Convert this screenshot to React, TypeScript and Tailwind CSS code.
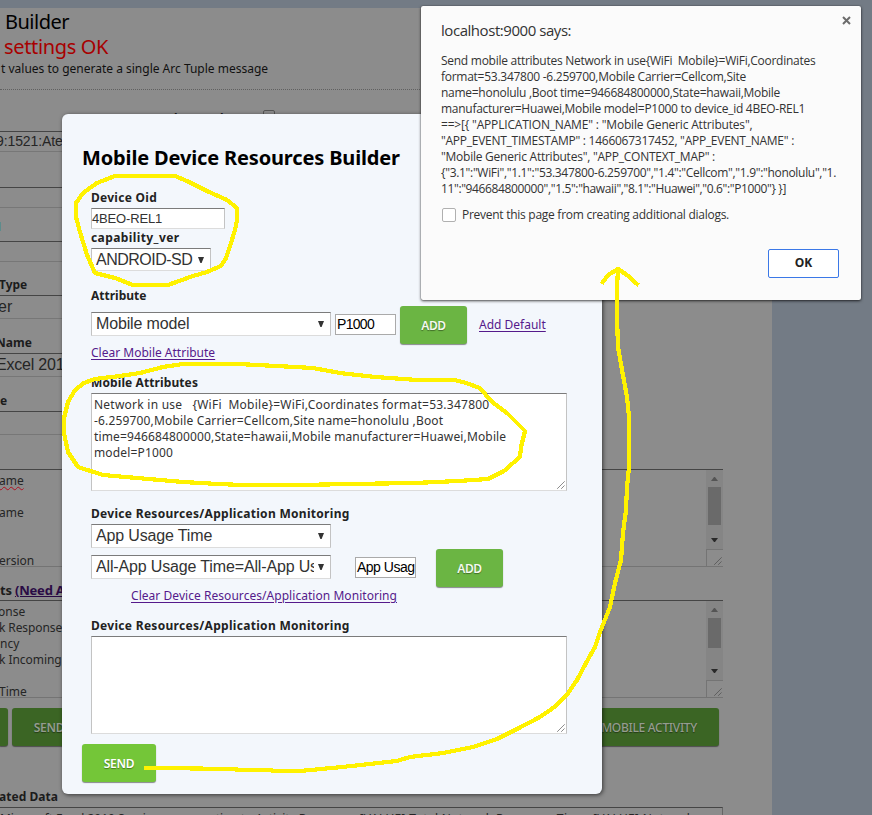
import type { ReactNode } from 'react';

function Grip({ className = '' }: { className?: string }) {
  return (
    <svg className={className} width="8" height="8" viewBox="0 0 8 8" stroke="#444" strokeWidth="1" strokeDasharray="1.1 0.35">
      <path d="M0.5 7.5 L7.5 0.5 M4.5 7.5 L7.5 4.5" fill="none" />
    </svg>
  );
}

function Select({ children, className }: { children: ReactNode; className: string }) {
  return (
    <div className={`flex items-center border border-t-[#7b7b7b] border-r-[#c3c3c3] border-b-[#dcdcdc] border-l-[#c3c3c3] bg-white pl-1 pr-1.5 font-['Liberation_Sans',sans-serif] text-[16px] text-[#333] ${className}`}>
      <span className="flex-1 overflow-hidden whitespace-nowrap leading-[20px]">{children}</span>
      <svg width="6" height="6" viewBox="0 0 6 6" className="ml-1 shrink-0">
        <path d="M0 0H6L3.6 6H2.4Z" fill="#333" />
      </svg>
    </div>
  );
}

function Button({ children, className }: { children: ReactNode; className: string }) {
  return (
    <button
      className={`flex items-center justify-center rounded-[3px] pt-px text-[12px] font-semibold tracking-[-0.3px] shadow-[0_1px_1px_rgba(0,0,0,0.45)] [text-shadow:0_1px_1px_rgba(0,0,0,0.4)] ${className}`}
    >
      {children}
    </button>
  );
}

function DimField({ children, className = '' }: { children?: ReactNode; className?: string }) {
  return (
    <div className={`w-[200px] whitespace-nowrap border-t border-b border-t-[#454545] border-b-[#777] font-['Liberation_Sans',sans-serif] text-[#252525] ${className}`}>
      {children}
    </div>
  );
}

function DimArea({ thumb, children }: { thumb: ReactNode; children: ReactNode }) {
  return (
    <div className="flex h-[98px] w-[723px] border-t border-b border-t-[#454545] border-b-[#747474]">
      <div className="flex-1 whitespace-pre pt-[3px] text-[12px] leading-[16px] text-[#252525]">{children}</div>
      <div className="flex w-[17px] flex-col bg-[#858585]">
        <div className="flex h-[79px] flex-col items-center">
          <svg width="7" height="4" viewBox="0 0 7 4" className="mt-[7px] mb-[6px] shrink-0">
            <path d="M3 0H4L7 4H0Z" fill="#555" />
          </svg>
          {thumb}
          <svg width="7" height="4" viewBox="0 0 7 4" className="mt-auto mb-[7px] shrink-0">
            <path d="M0 0H7L4 4H3Z" fill="#292929" />
          </svg>
        </div>
        <div className="flex flex-1 items-end justify-end border-t border-l border-[#747474] bg-[#8c8c8c] p-px">
          <Grip />
        </div>
      </div>
    </div>
  );
}

function BackgroundPage() {
  return (
    <main className="flex h-[807px] w-[772px] flex-col overflow-hidden bg-[#8c8c8c] text-[12px] text-[#1c1c1c] [&>*]:shrink-0">
      <h1 className="mt-px h-[25px] whitespace-nowrap pl-[5px] text-[20px] leading-[25px] tracking-[-0.5px] text-black">Builder</h1>
      <h2 className="h-[26px] whitespace-nowrap pl-[4px] text-[20px] leading-[25px] tracking-[-0.35px] text-[#a80000]">settings OK</h2>
      <p className="h-[29px] whitespace-nowrap pl-px leading-[18px] text-[#111]">t values to generate a single Arc Tuple message</p>
      <div className="h-[20px] border-t border-dotted border-[#606060]" />
      <div className="flex h-[22px] pt-px font-bold">
        <span className="ml-[174px] w-[42px] pt-px leading-[16px]">l</span>
        <span className="w-[47px] pt-px leading-[16px]">d</span>
        <span className="h-[13px] w-[12px] rounded-[2px] border border-[#555]" />
      </div>
      <DimField className="h-[21px] text-[14px] leading-[19px] tracking-[-0.1px]"><span className="-ml-[4px]">9:1521:Aten</span></DimField>
      <DimField className="mt-[35px] h-[21px]" />
      <div className="flex h-[33px] items-center">
        <span className="mt-1 h-[9px] w-px bg-[#5d8c8c]" />
      </div>
      <DimField className="h-[21px]" />
      <div className="h-[33px] pt-[15px] leading-[16px] font-bold"><span className="-ml-px">Type</span></div>
      <DimField className="h-[24px] text-[16px] leading-[22px]"><span className="-ml-[2px]">er</span></DimField>
      <div className="h-[34px] pt-[16px] leading-[16px] font-bold"><span className="-ml-[4px]">Name</span></div>
      <DimField className="h-[24px] text-[16px] leading-[22px] tracking-[-0.2px]"><span className="-ml-[4px]">Excel 2010</span></DimField>
      <div className="h-[34px] pt-[16px] leading-[16px] font-bold"><span>e</span></div>
      <DimField className="h-[24px]" />
      <div className="h-[34px]" />
      <DimArea thumb={<div className="h-[38px] w-[13px] bg-[#6a6a6a]" />}>
        <div><span className="-ml-px underline decoration-[#b01020] decoration-wavy decoration-[1px] underline-offset-1">ame</span></div>
        <div className="h-4" />
        <div className="-ml-px">ame</div>
        <div className="h-8" />
        <div className="-ml-px">ersion</div>
      </DimArea>
      <div className="h-[33px] pt-[15px] text-[13px] leading-[16px] font-bold tracking-[-0.2px]">
        ts <span className="text-[#2a0b45] underline">(Need Application)</span>
      </div>
      <DimArea thumb={<div className="h-[30px] w-[13px] bg-[#6a6a6a]" />}>
        <div className="-ml-[2px]">onse</div>
        <div className="-ml-px tracking-[-0.1px]">k Response</div>
        <div>ncy</div>
        <div className="-ml-px tracking-[-0.05px]">k Incoming</div>
        <div className="h-4" />
        <div className="-ml-px">Time</div>
      </DimArea>
      <div className="mt-[10px] flex h-[38px] w-[719px] justify-between text-[#959c90]">
        <div className="flex gap-1">
          <Button className="w-[8px] rounded-l-none bg-[#3b6524]">{''}</Button>
          <Button className="w-[74px] bg-[#3b6524]">SEND</Button>
        </div>
        <div className="flex w-[150px] rounded-[3px] bg-[#3b6524] shadow-[0_1px_1px_rgba(0,0,0,0.45)]">
          <span className="ml-auto mr-[22px] pt-px text-[12px] leading-[38px] font-medium tracking-[-0.3px] whitespace-nowrap [text-shadow:0_1px_1px_rgba(0,0,0,0.4)]">MOBILE ACTIVITY</span>
        </div>
      </div>
      <div className="mt-[43px] h-[18px] leading-[16px] font-bold tracking-[0.05px]"><span className="-ml-px">ated Data</span></div>
      <div className="h-[30px] w-[723px] whitespace-nowrap border-t border-r border-t-[#454545] border-r-[#666] pt-[3px] leading-[16px] text-[#252525]">
        <span className="tracking-[-0.02px]">Microsoft Excel 2010 Session consumption to Activity Response: </span>
        <span className="tracking-[0.35px]">[VALUE] Total Network Response Time: [VALUE] Network</span>
      </div>
    </main>
  );
}

function Label({ children, className = '' }: { children: ReactNode; className?: string }) {
  return <div className={`h-4 whitespace-nowrap text-[12px] leading-[16px] font-bold text-[#222] ${className}`}>{children}</div>;
}

function Area({ children }: { children?: ReactNode }) {
  return (
    <div className="flex h-[98px] w-[476px] border border-t-[#7b7b7b] border-r-[#c3c3c3] border-b-[#dcdcdc] border-l-[#c3c3c3] bg-white pt-[3px] pr-px pb-px pl-[2px]">
      <div className="flex-1 whitespace-pre text-[12px] leading-[16px] text-[#333]">{children}</div>
      <Grip className="self-end" />
    </div>
  );
}

function BuilderModal() {
  return (
    <section className="absolute top-[114px] left-[62px] h-[680px] w-[540px] rounded-[6px] bg-[#f3f7fc] shadow-[1px_1px_4px_rgba(0,0,0,0.6)]">
      <h2 className="h-[76px] whitespace-nowrap pt-[30px] pl-5 text-[20px] leading-[28px] font-bold tracking-[-0.15px] text-black">Mobile Device Resources Builder</h2>
      <div className="flex flex-col pl-[29px]">
        <Label className="tracking-[0.27px]">Device Oid</Label>
        <div className="mt-[2px] h-[21px] w-[134px] border border-t-[#7b7b7b] border-r-[#c3c3c3] border-b-[#dcdcdc] border-l-[#c3c3c3] bg-white font-['Liberation_Sans',sans-serif] text-[13px] leading-[19px] tracking-[-0.15px] text-[#333]">4BEO-REL1</div>
        <Label className="mt-px tracking-[0.4px]">capability_ver</Label>
        <Select className="mt-[2px] h-[23px] w-[120px] tracking-[-0.5px]">ANDROID-SD</Select>
        <Label className="mt-[17px]">Attribute</Label>
        <div className="mt-[2px] flex h-[38px]">
          <Select className="mt-[6px] h-[24px] w-[240px] tracking-[-0.15px]">Mobile model</Select>
          <div className="mt-[8px] ml-1 h-[21px] w-[61px] border border-[#aaa] bg-white pl-px font-['Liberation_Sans',sans-serif] text-[14px] leading-[19px] tracking-[-0.7px] text-black">P1000</div>
          <Button className="ml-1 w-[67px] bg-[#6bb543] text-[#f4faef]">ADD</Button>
          <a className="ml-3 text-[12px] leading-[37px] text-[#551a8b] underline underline-offset-2">Add Default</a>
        </div>
        <a className="mt-px h-4 text-[12px] leading-[16px] text-[#551a8b] underline underline-offset-2">Clear Mobile Attribute</a>
        <Label className="mt-[14px] mb-[2px] tracking-[0.1px]">Mobile Attributes</Label>
        <Area>
          <div className="tracking-[0.24px]">{'Network in use   {WiFi  Mobile}=WiFi,Coordinates format=53.347800'}</div>
          <div className="tracking-[0.16px]">-6.259700,Mobile Carrier=Cellcom,Site name=honolulu ,Boot</div>
          <div className="tracking-[0.14px]">time=946684800000,State=hawaii,Mobile manufacturer=Huawei,Mobile</div>
          <div className="tracking-[0.15px]">model=P1000</div>
        </Area>
        <Label className="mt-[15px] tracking-[0.3px]">Device Resources/Application Monitoring</Label>
        <Select className="mt-[2px] h-[24px] w-[240px] tracking-[-0.15px]">App Usage Time</Select>
        <div className="mt-px flex h-[38px]">
          <Select className="mt-[6px] h-[24px] w-[240px] tracking-[-0.15px]">All-App Usage Time=All-App Us</Select>
          <div className="mt-[8px] ml-6 h-[21px] w-[61px] border border-[#aaa] bg-white pl-px font-['Liberation_Sans',sans-serif] text-[14px] leading-[19px] tracking-[-0.5px] whitespace-nowrap text-black">App Usag</div>
          <Button className="ml-5 w-[67px] bg-[#6bb543] text-[#f4faef]">ADD</Button>
        </div>
        <a className="mt-px ml-10 h-4 whitespace-nowrap text-[12px] leading-[16px] tracking-[0.046px] text-[#551a8b] underline underline-offset-2">Clear Device Resources/Application Monitoring</a>
        <Label className="mt-[14px] mb-[2px] tracking-[0.3px]">Device Resources/Application Monitoring</Label>
        <Area />
      </div>
      <Button className="mt-[10px] ml-5 h-[38px] w-[74px] bg-[#74c638] text-white">SEND</Button>
    </section>
  );
}

function AlertDialog() {
  return (
    <section className="absolute top-[6px] left-[421px] flex h-[294px] w-[440px] flex-col rounded-[2px] bg-[#fbfbfb] pl-5 font-['Open_Sans',sans-serif] text-[12px] text-[#333] shadow-[0_1px_3px_rgba(0,0,0,0.7),0_0_1px_rgba(0,0,0,0.6)]">
      <div className="flex h-[47px] justify-between">
        <h3 className="pt-[14px] text-[15px] leading-[20px] tracking-[-0.45px]">localhost:9000 says:</h3>
        <svg width="9" height="9" viewBox="0 0 9 9" className="mt-[10px] mr-[10px]" stroke="#6c6c6c" strokeWidth="2">
          <path d="M1 1L8 8M8 1L1 8" />
        </svg>
      </div>
      <div className="whitespace-pre leading-[16px]">
        <div className="tracking-[-0.27px]">{'Send mobile attributes Network in use{WiFi  Mobile}=WiFi,Coordinates'}</div>
        <div className="tracking-[-0.266px]">format=53.347800 -6.259700,Mobile Carrier=Cellcom,Site</div>
        <div className="tracking-[-0.274px]">name=honolulu ,Boot time=946684800000,State=hawaii,Mobile</div>
        <div className="tracking-[-0.279px]">manufacturer=Huawei,Mobile model=P1000 to device_id 4BEO-REL1</div>
        <div className="tracking-[-0.18px]">{'==>[{ "APPLICATION_NAME" : "Mobile Generic Attributes",'}</div>
        <div className="tracking-[-0.26px]">"APP_EVENT_TIMESTAMP" : 1466067317452, "APP_EVENT_NAME" :</div>
        <div className="tracking-[-0.242px]">"Mobile Generic Attributes", "APP_CONTEXT_MAP" :</div>
        <div className="tracking-[-0.313px]">{'{"3.1":"WiFi","1.1":"53.347800-6.259700","1.4":"Cellcom","1.9":"honolulu","1.'}</div>
        <div className="tracking-[-0.364px]">{'11":"946684800000","1.5":"hawaii","8.1":"Huawei","0.6":"P1000"} }]'}</div>
      </div>
      <label className="mt-[10px] flex h-4 items-center tracking-[-0.27px]">
        <span className="ml-px mr-[6px] h-[14px] w-[14px] rounded-[2px] border border-[#b0b0b0] bg-white" />
        Prevent this page from creating additional dialogs.
      </label>
      <button className="mt-[26px] mr-[22px] h-[29px] w-[71px] self-end rounded-[2px] border border-[#3b78e7] bg-white pb-px text-[12px] font-bold text-[#222]">OK</button>
    </section>
  );
}

function Annotations() {
  return (
    <svg className="pointer-events-none absolute inset-0" width="872" height="815" viewBox="0 0 872 815" fill="none" stroke="#fff200" strokeWidth="4.2" strokeLinejoin="round" strokeLinecap="square" shapeRendering="crispEdges">
      <path d="M115 176H175L187 181L207 191L227 200L237 208L237 220L235 230L231 243L226 258L221 266L207 272L193 276L168 285H133L115 278L95 273L87 255L80 232L76 217V203L83 193L97 183Z" />
      <path d="M183 364H238L277 366L313 368L340 373L375 377L417 380H455L466 383L480 388L492 402L507 413L525 431L521 447L520 457L513 463L504 471L488 479L458 481L415 483L350 484L300 485H242L218 484L183 482L137 478L103 475L78 467L68 452L64 433V418L68 402L75 390L84 383L95 379L120 376L140 373L163 367Z" />
      <path d="M146 768H162L230 769L243 770H267L277 771H300L342 767L397 761L410 757L443 753L473 747L497 739L517 729L540 717L553 708L566 696L577 680L586 663L595 647L600 632L610 607L615 583L621 560L623 533L626 510L627 487L629 467V417L627 397L622 370L618 347L617 317V287L618 270" />
      <path d="M603 282L608 275L618 269L627 275L637 284" />
    </svg>
  );
}

export default function App() {
  return (
    <div className="relative h-[815px] w-[872px] overflow-hidden bg-[#737b85] pt-2 font-['Noto_Sans',sans-serif]">
      <BackgroundPage />
      <BuilderModal />
      <AlertDialog />
      <Annotations />
    </div>
  );
}
